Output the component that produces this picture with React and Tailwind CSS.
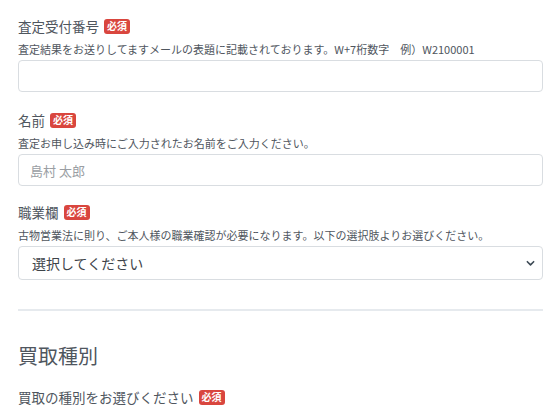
import React from 'react'

const Required = () => (
    <span className="ml-[5px] inline-flex items-center rounded-[3px] bg-[#d9463e] px-[3px] h-[15px] text-[10px] font-bold leading-none text-white">
        必須
    </span>
)

const Label = ({ children }) => (
    <div className="flex items-center h-[20px] text-[13.5px] text-[#4f565e]">
        {children}
        <Required />
    </div>
)

const Help = ({ children }) => (
    <p className="mt-[5px] h-[16px] text-[11px] leading-[16px] text-[#4f565e] whitespace-nowrap">{children}</p>
)

const App = () => {
    return (
        <div className="min-h-[420px] bg-white pl-[18px] pt-[16px] pr-[17px] font-['Noto_Sans_CJK_JP','Noto_Sans',sans-serif]">
            <div>
                <Label>査定受付番号</Label>
                <Help>査定結果をお送りしてますメールの表題に記載されております。W+7桁数字　例）W2100001</Help>
                <input
                    type="text"
                    className="mt-[3px] block h-[32px] w-full rounded-[4px] border border-[#d9dde1] px-3 text-[13px] outline-none"
                />
            </div>

            <div className="mt-[18px]">
                <Label>名前</Label>
                <Help>査定お申し込み時にご入力されたお名前をご入力ください。</Help>
                <input
                    type="text"
                    placeholder="島村 太郎"
                    className="mt-[3px] block h-[32px] w-full rounded-[4px] border border-[#d9dde1] px-[11px] text-[13px] text-[#333] placeholder:text-[#9a9ea3] outline-none"
                />
            </div>

            <div className="mt-[16px]">
                <Label>職業欄</Label>
                <Help>古物営業法に則り、ご本人様の職業確認が必要になります。以下の選択肢よりお選びください。</Help>
                <div className="relative mt-[3px]">
                    <select className="block h-[34px] w-full appearance-none rounded-[4px] border border-[#d9dde1] bg-white px-[13px] text-[14px] text-[#3d4349] outline-none">
                        <option>選択してください</option>
                    </select>
                    <svg className="pointer-events-none absolute right-[8px] top-[14px] h-[7px] w-[9px]" viewBox="0 0 10 7" fill="none">
                        <path d="M1.5 1.5 L5 5 L8.5 1.5" stroke="#3d4a55" strokeWidth="1.8" strokeLinecap="round" strokeLinejoin="round" />
                    </svg>
                </div>
            </div>

            <hr className="mt-[29px] border-0 border-t-2 border-[#e6eaee]" />

            <h2 className="mt-[31px] text-[20px] leading-[28px] text-[#4f565e]">買取種別</h2>

            <div className="mt-[17px]">
                <Label>買取の種別をお選びください</Label>
            </div>
        </div>
    )
}

export default App
